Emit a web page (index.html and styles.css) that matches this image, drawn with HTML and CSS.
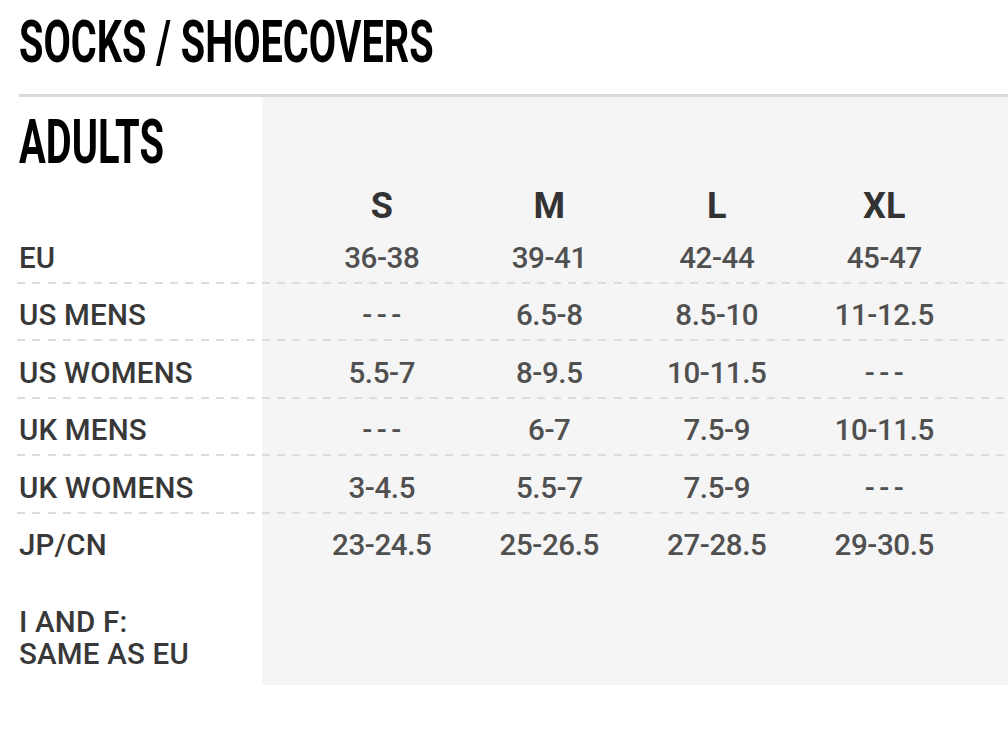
FILE: index.html
```html
<!DOCTYPE html>
<html lang="en">
<head>
<meta charset="utf-8">
<title>Socks / Shoecovers size chart</title>
<link rel="stylesheet" href="styles.css">
</head>
<body>
<div class="page">
  <h1 class="title"><span class="cond">SOCKS / SHOECOVERS</span></h1>
  <div class="rule"></div>
  <section class="chart">
    <h2 class="group"><span class="cond">ADULTS</span></h2>
    <div class="row head">
      <div></div><div class="size">S</div><div class="size">M</div><div class="size">L</div><div class="size">XL</div>
    </div>
    <div class="row line">
      <div class="label">EU</div><div class="val">36-38</div><div class="val">39-41</div><div class="val">42-44</div><div class="val">45-47</div>
    </div>
    <div class="row line">
      <div class="label">US MENS</div><div class="val none">---</div><div class="val">6.5-8</div><div class="val">8.5-10</div><div class="val">11-12.5</div>
    </div>
    <div class="row line">
      <div class="label">US WOMENS</div><div class="val">5.5-7</div><div class="val">8-9.5</div><div class="val">10-11.5</div><div class="val none">---</div>
    </div>
    <div class="row line">
      <div class="label">UK MENS</div><div class="val none">---</div><div class="val">6-7</div><div class="val">7.5-9</div><div class="val">10-11.5</div>
    </div>
    <div class="row line">
      <div class="label">UK WOMENS</div><div class="val">3-4.5</div><div class="val">5.5-7</div><div class="val">7.5-9</div><div class="val none">---</div>
    </div>
    <div class="row">
      <div class="label">JP/CN</div><div class="val">23-24.5</div><div class="val">25-26.5</div><div class="val">27-28.5</div><div class="val">29-30.5</div>
    </div>
    <p class="note">I AND F:<br>SAME AS EU</p>
  </section>
</div>
</body>
</html>
```
FILE: styles.css
```css
html, body {
  margin: 0;
  padding: 0;
  background: #fff;
}

body {
  font-family: Roboto, "Liberation Sans", sans-serif;
  color: #333;
}

.page {
  margin-left: 19px;
}

.cond {
  display: inline-block;
  transform-origin: left center;
  white-space: nowrap;
}

.title {
  margin: 12px 0 0;
  font-size: 59px;
  line-height: 59px;
  font-weight: 700;
  color: #000;
}

.title .cond {
  transform: scaleX(0.672);
}

.rule {
  margin-top: 23px;
  height: 3px;
  background: #dadada;
}

.chart {
  padding: 14px 0 15px;
  background: linear-gradient(to right, #fff 243px, #f5f5f5 243px);
}

.group {
  margin: 0;
  font-size: 62px;
  line-height: 62px;
  font-weight: 700;
  color: #000;
}

.group .cond {
  transform: scaleX(0.643);
}

.row {
  display: grid;
  grid-template-columns: 279px repeat(4, 167.5px) 1fr;
  margin-left: -2px;
  padding-left: 2px;
  height: 57.6px;
  box-sizing: border-box;
  padding-top: 5.5px;
  font-size: 29.5px;
  line-height: 52px;
  font-weight: 500;
}

.row.line {
  background-image: repeating-linear-gradient(to right, #dcdcdc 0 8px, transparent 8px 15.3px);
  background-size: 100% 2px;
  background-position: left bottom;
  background-repeat: no-repeat;
}

.row.head {
  height: 53px;
  padding-top: 15px;
  font-size: 36px;
  line-height: 36px;
  font-weight: 700;
}

.label {
  white-space: nowrap;
  color: #383838;
  letter-spacing: 0.2px;
}

.size {
  text-align: center;
  color: #333;
}

.val {
  text-align: center;
  white-space: nowrap;
  color: #505050;
  letter-spacing: -0.4px;
}

.val.none {
  letter-spacing: 4.5px;
  padding-left: 4.5px;
}

.note {
  margin: 34.5px 0 0;
  font-size: 29.5px;
  line-height: 32px;
  font-weight: 500;
  letter-spacing: 0.2px;
  color: #383838;
}
```
